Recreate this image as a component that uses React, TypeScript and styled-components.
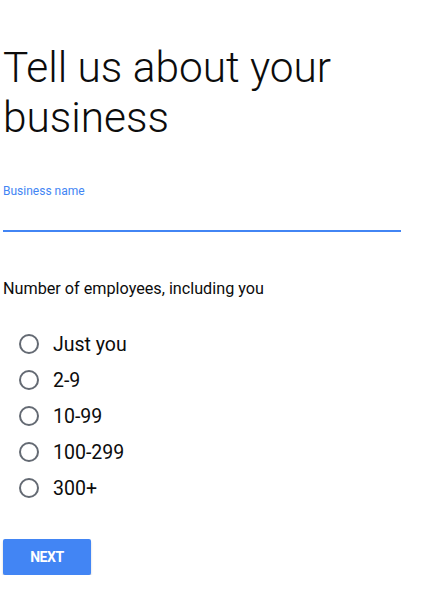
import { useState } from "react";
import styled, { createGlobalStyle } from "styled-components";

const GlobalStyle = createGlobalStyle`
    body {
        margin: 0;
        background: #ffffff;
        font-family: Roboto, "Liberation Sans", sans-serif;
        color: #202124;
    }
`;

const Page = styled.main`
    display: flex;
    flex-direction: column;
    padding: 43px 21px 0 3px;
`;

const Titulo = styled.h1`
    margin: 0;
    font-size: 42.4px;
    line-height: 50px;
    font-weight: 300;
    color: #0c0c0c;
`;

const Campo = styled.label`
    display: flex;
    flex-direction: column;
    margin-top: 40px;
`;

const Rotulo = styled.span`
    font-size: 12px;
    line-height: 16px;
    color: #4285f4;
`;

const Input = styled.input`
    height: 31px;
    border: none;
    border-bottom: 2px solid #4285f4;
    padding: 0;
    outline: none;
    font-family: inherit;
    font-size: 16px;
    background: transparent;
`;

const Pergunta = styled.p`
    margin: 47px 0 0;
    font-size: 16.2px;
    line-height: 20px;
    color: #0c0c0c;
`;

const Opcoes = styled.div`
    display: flex;
    flex-direction: column;
    margin-top: 27px;
`;

const Opcao = styled.label`
    display: flex;
    align-items: center;
    gap: 14px;
    height: 36px;
    padding-left: 16px;
    font-size: 19.5px;
    color: #0c0c0c;
    cursor: pointer;
`;

const Circulo = styled.span<{ $ativo: boolean }>`
    box-sizing: border-box;
    width: 20px;
    height: 20px;
    border-radius: 50%;
    border: 2px solid ${(p) => (p.$ativo ? "#4285f4" : "#646a73")};
    display: flex;
    align-items: center;
    justify-content: center;

    &::after {
        content: "";
        width: 10px;
        height: 10px;
        border-radius: 50%;
        background: #4285f4;
        display: ${(p) => (p.$ativo ? "block" : "none")};
    }
`;

const Botao = styled.button`
    align-self: flex-start;
    margin-top: 33px;
    width: 88px;
    height: 36px;
    border: none;
    border-radius: 2px;
    background: #4285f4;
    color: #ffffff;
    font-family: Roboto, "Liberation Sans", sans-serif;
    font-size: 14px;
    font-weight: 700;
    letter-spacing: -0.4px;
    box-shadow: 0 2px 2px rgba(0, 0, 0, 0.22);
    cursor: pointer;
`;

const faixas = ["Just you", "2-9", "10-99", "100-299", "300+"];

export default function App() {
    const [nome, setNome] = useState("");
    const [faixa, setFaixa] = useState("");

    return (
        <Page>
            <GlobalStyle />
            <Titulo>Tell us about your business</Titulo>
            <Campo>
                <Rotulo>Business name</Rotulo>
                <Input value={nome} onChange={(e) => setNome(e.target.value)} />
            </Campo>
            <Pergunta>Number of employees, including you</Pergunta>
            <Opcoes>
                {faixas.map((f) => (
                    <Opcao key={f} onClick={() => setFaixa(f)}>
                        <Circulo $ativo={faixa === f} />
                        {f}
                    </Opcao>
                ))}
            </Opcoes>
            <Botao type="button">NEXT</Botao>
        </Page>
    );
}
